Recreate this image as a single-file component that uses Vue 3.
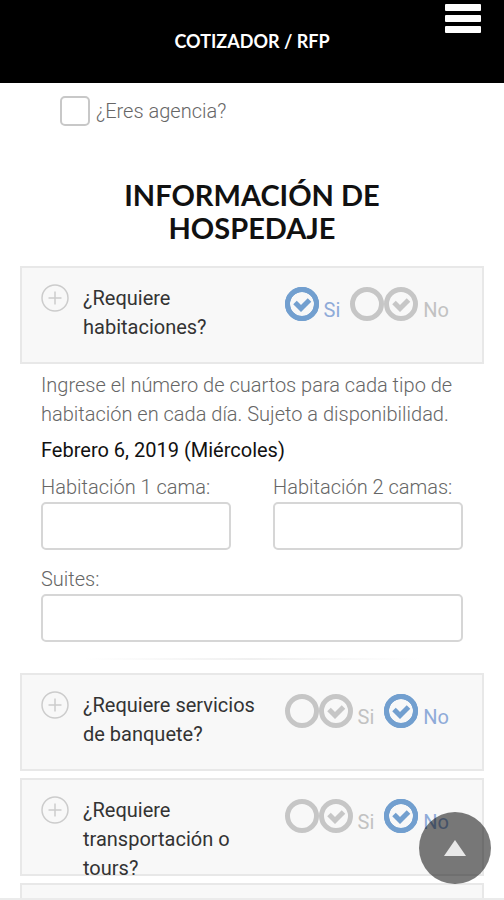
<template>
  <div class="page">
    <header class="header">
      <span class="header__title">COTIZADOR / RFP</span>
      <button class="header__menu" type="button" aria-label="Menú">
        <span></span>
        <span></span>
        <span></span>
      </button>
    </header>

    <main class="content" ref="contentEl">
      <label class="agency">
        <input v-model="isAgency" type="checkbox" />
        <span>¿Eres agencia?</span>
      </label>

      <h1 class="heading">INFORMACIÓN DE HOSPEDAJE</h1>

      <template v-for="q in questions" :key="q.id">
        <fieldset class="question">
          <svg class="question__plus" viewBox="0 0 28 28" aria-hidden="true">
            <circle cx="14" cy="14" r="13" />
            <path d="M14 7.5v13M7.5 14h13" />
          </svg>
          <span class="question__title">{{ q.title }}</span>
          <div class="question__options">
            <label v-for="o in options" :key="o" class="option">
              <input v-model="q.answer" type="radio" :name="q.id" :value="o" />
              <svg viewBox="0 0 34 34" aria-hidden="true">
                <circle cx="17" cy="17" r="14.5" />
                <path d="M10 15.5l6 6L24.5 13" />
              </svg>
              <span>{{ o }}</span>
            </label>
          </div>
        </fieldset>

        <section v-if="q.id === 'rooms'" class="rooms">
          <p class="rooms__help">
            Ingrese el número de cuartos para cada tipo de habitación en cada día. Sujeto a disponibilidad.
          </p>
          <p class="rooms__date">Febrero 6, 2019 (Miércoles)</p>
          <div class="rooms__grid">
            <div v-for="f in fields" :key="f.id" class="field" :class="{ 'field--wide': f.wide }">
              <label :for="f.id">{{ f.label }}</label>
              <input :id="f.id" v-model="f.value" type="text" />
            </div>
          </div>
          <hr class="rooms__divider" />
        </section>
      </template>

      <div class="question"></div>
    </main>

    <button class="to-top" type="button" aria-label="Subir" @click="scrollTop">
      <svg viewBox="0 0 24 18" aria-hidden="true"><path d="M12 1L23 17H1z" /></svg>
    </button>
  </div>
</template>

<script setup>
import { ref } from 'vue'

const contentEl = ref(null)
const isAgency = ref(false)
const options = ['Si', 'No']

const questions = ref([
  { id: 'rooms', title: '¿Requiere habitaciones?', answer: 'Si' },
  { id: 'banquet', title: '¿Requiere servicios de banquete?', answer: 'No' },
  { id: 'transport', title: '¿Requiere transportación o tours?', answer: 'No' }
])

const fields = ref([
  { id: 'single', label: 'Habitación 1 cama:', value: '' },
  { id: 'double', label: 'Habitación 2 camas:', value: '' },
  { id: 'suites', label: 'Suites:', value: '', wide: true }
])

function scrollTop() {
  contentEl.value.scrollTop = 0
}
</script>

<style>
body {
  margin: 0;
  background: #fff;
}
</style>

<style scoped>
.page {
  box-sizing: border-box;
  display: flex;
  flex-direction: column;
  height: 100vh;
  border-bottom: 2px solid #ebebeb;
  font-family: Roboto, "Liberation Sans", sans-serif;
  font-size: 20px;
  font-weight: 300;
  line-height: 29px;
  color: #666;
}

.header {
  position: relative;
  flex: none;
  display: flex;
  align-items: center;
  justify-content: center;
  height: 83px;
  background: #000;
}

.header__title {
  font-family: Lato, sans-serif;
  font-size: 18px;
  font-weight: 700;
  color: #fff;
}

.header__menu {
  position: absolute;
  top: 4px;
  right: 23px;
  display: flex;
  flex-direction: column;
  gap: 4px;
  width: 36px;
  padding: 0;
  border: 0;
  background: none;
  cursor: pointer;
}

.header__menu span {
  height: 7px;
  border-radius: 1px;
  background: #fff;
}

.content {
  flex: 1;
  min-height: 0;
  padding: 0 20px;
  overflow-y: auto;
  scrollbar-width: none;
}

.agency {
  display: flex;
  align-items: center;
  gap: 6px;
  margin: 13px 40px 0;
}

.agency input {
  appearance: none;
  width: 30px;
  height: 30px;
  margin: 0;
  border: 2px solid #c8c8c8;
  border-radius: 5px;
  background: #fff;
}

.agency input:checked {
  background: #6f9fd0;
}

.heading {
  max-width: 320px;
  margin: 52px auto 22px;
  font-family: Lato, sans-serif;
  font-size: 29px;
  font-weight: 700;
  line-height: 33px;
  text-align: center;
  color: #111;
}

.question {
  box-sizing: border-box;
  display: flex;
  align-items: flex-start;
  height: 98px;
  min-width: 0;
  margin: 0 0 7px;
  padding: 16px 33px 0 19px;
  border: 2px solid #e8e8e8;
  background: #f8f8f8;
}

.question__plus {
  flex: none;
  width: 28px;
  height: 28px;
  margin-right: 14px;
  fill: none;
  stroke: #ccc;
  stroke-width: 1.5;
}

.question__title {
  flex: 1;
  margin-right: 20px;
  font-weight: 400;
  color: #333;
}

.question__options {
  display: flex;
  gap: 10px;
  padding-top: 3px;
}

.option {
  display: flex;
  font-weight: 400;
  color: #c2c2c2;
}

.option input {
  appearance: none;
  box-sizing: border-box;
  width: 34px;
  height: 34px;
  margin: 0;
  border: 5px solid #c6c6c6;
  border-radius: 50%;
}

.option svg {
  width: 34px;
  height: 34px;
  fill: none;
  stroke: #c6c6c6;
  stroke-width: 5;
}

.option span {
  margin: 9px 0 0 5px;
}

.option:has(input:checked) {
  color: #8fabd8;
}

.option input:checked {
  border-color: #729fcf;
}

/* la marca queda encima del círculo seleccionado */
.option input:checked + svg {
  margin-left: -34px;
  stroke: #729fcf;
}

.rooms {
  padding: 0 21px;
}

.rooms__help,
.rooms__date {
  margin: 0 0 7px;
}

.rooms__date {
  font-weight: 400;
  color: #111;
}

.rooms__grid {
  display: grid;
  grid-template-columns: 1fr 1fr;
  gap: 14px 42px;
}

.field {
  display: flex;
  flex-direction: column;
  min-width: 0;
}

.field--wide {
  grid-column: 1 / -1;
}

.field label {
  line-height: 30px;
}

.field input {
  box-sizing: border-box;
  width: 100%;
  height: 48px;
  padding: 0 12px;
  border: 2px solid #d6d6d6;
  border-radius: 5px;
  background: #fff;
  font: inherit;
}

.rooms__divider {
  height: 2px;
  margin: 16px 0 13px;
  border: 0;
  background: linear-gradient(to right, transparent 10%, #f0f0f0 50%, transparent 90%);
}

.to-top {
  position: fixed;
  right: 13px;
  bottom: 16px;
  display: flex;
  align-items: center;
  justify-content: center;
  width: 72px;
  height: 72px;
  padding: 0;
  border: 0;
  border-radius: 50%;
  background: rgba(0, 0, 0, 0.52);
  cursor: pointer;
}

.to-top svg {
  width: 24px;
  height: 18px;
  fill: #e8e8e8;
}
</style>
